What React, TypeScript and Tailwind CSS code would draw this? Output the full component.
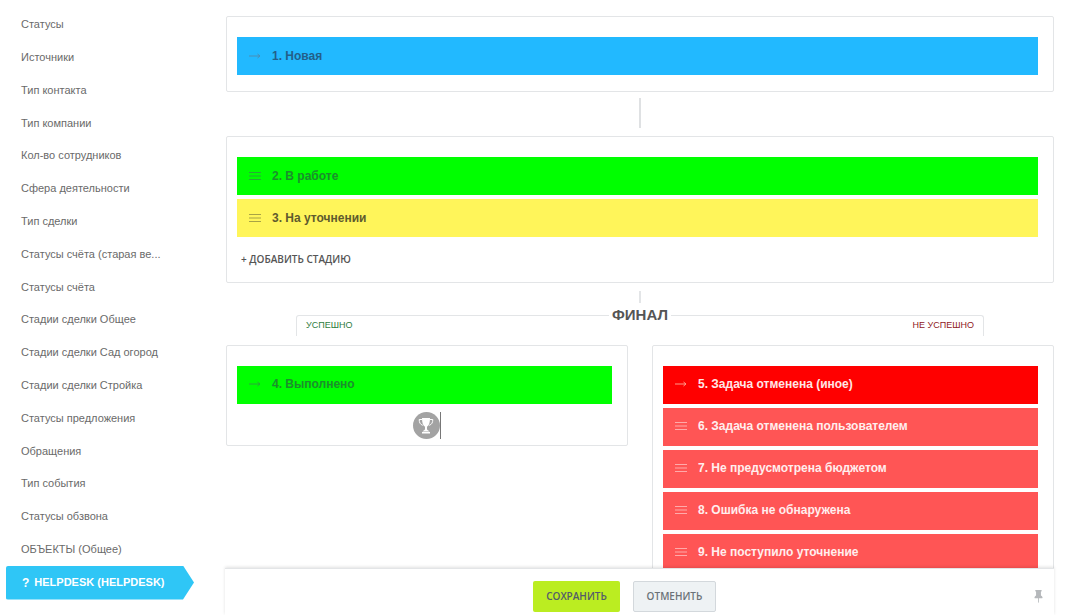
import React from "react";
import { BsPinFill } from "react-icons/bs";

const sideItems = [
  "Статусы",
  "Источники",
  "Тип контакта",
  "Тип компании",
  "Кол-во сотрудников",
  "Сфера деятельности",
  "Тип сделки",
  "Статусы счёта (старая ве...",
  "Статусы счёта",
  "Стадии сделки Общее",
  "Стадии сделки Сад огород",
  "Стадии сделки Стройка",
  "Статусы предложения",
  "Обращения",
  "Тип события",
  "Статусы обзвона",
  "ОБЪЕКТЫ (Общее)",
];

const Arrow = () => (
  <svg width="12" height="8" viewBox="0 0 12 8" fill="none" stroke="currentColor" strokeWidth="1">
    <path d="M0 4h11M8.5 2l2.5 2-2.5 2" />
  </svg>
);

const Burger = () => (
  <svg width="12" height="8" viewBox="0 0 12 8" fill="none" stroke="currentColor" strokeWidth="1">
    <path d="M0 .5h12M0 4h12M0 7.5h12" />
  </svg>
);

const Trophy = () => (
  <svg width="16" height="17" viewBox="0 0 16 17" fill="none">
    <path d="M4 1h8c0 4.500-.8 7.500-3 8.700V12c0 1 1.500 1.500 2.500 2.500h-7C5.500 13.500 7 13 7 12V9.700C4.800 8.500 4 5.500 4 1z" fill="white" />
    <path d="M4 2.500H1.200c0 3 1 5 3.600 5.800M12 2.500h2.800c0 3-1 5-3.600 5.800" stroke="white" strokeWidth="1" />
    <rect x="4" y="15" width="8" height="1.500" fill="white" />
  </svg>
);

type StageProps = {
  title: string;
  bg: string;
  text: string;
  icon: string;
  fixed?: boolean;
  lift?: boolean;
};

const Stage: React.FC<StageProps> = ({ title, bg, text, icon, fixed, lift }) => (
  <div className={`h-[38px] shrink-0 flex items-center pl-3 text-xs font-bold ${bg} ${lift ? "pb-[2px]" : ""}`}>
    <span className={`w-[23px] shrink-0 ${icon}`}>{fixed ? <Arrow /> : <Burger />}</span>
    <span className={text}>{title}</span>
  </div>
);

const cardClass = "bg-white border border-[#e3e5e7] rounded-[2px]";

export default function App() {
  return (
    <div className="relative w-[1065px] h-[615px] overflow-hidden bg-white flex font-['Liberation_Sans',Arial,sans-serif] text-[#555]">
      <aside className="w-[226px] shrink-0 pt-2 text-[11px]">
        {sideItems.map((item) => (
          <div key={item} className="h-[32.8px] flex items-center pl-[21px] text-[#6a6a6a]">
            {item}
          </div>
        ))}
        <div className="ml-[6px] w-[188px] h-[34px] flex items-center pl-4 gap-[5px] rounded-l-[2px] bg-[#2fc6f6] text-white font-bold [clip-path:polygon(0_0,177px_0,100%_50%,177px_100%,0_100%)]">
          <span className="text-xs">?</span>
          <span>HELPDESK (HELPDESK)</span>
        </div>
      </aside>

      <main className="w-[828px] pt-4 flex flex-col items-stretch">
        <section className={`${cardClass} h-[76px] pt-5 pl-[10px] pr-[15px]`}>
          <Stage title="1. Новая" bg="bg-[#22b9ff]" text="text-[#235f8a]" icon="text-[#4b8fb5]" fixed />
        </section>

        <div className="h-[30px] w-[2px] bg-[#dfe1e3] mt-[6px] mb-2 self-center" />

        <section className={`${cardClass} h-[147px] pt-5 pl-[10px] pr-[15px] flex flex-col gap-1`}>
          <Stage title="2. В работе" bg="bg-[#00ff00]" text="text-[#1b8f2c]" icon="text-[#2aa63a]" />
          <Stage title="3. На уточнении" bg="bg-[#fff55a]" text="text-[#5f5b2e]" icon="text-[#a8a345]" />
          <div className="pt-[11px] pl-1 text-[10px] font-semibold text-[#555] font-['Open_Sans',sans-serif]">
            + ДОБАВИТЬ СТАДИЮ
          </div>
        </section>

        <div className="h-3 w-[2px] bg-[#e3e5e7] mt-2 self-center" />

        <div className="relative mt-3 mx-[70px] h-[21px] border border-b-0 border-[#e3e5e7] rounded-t-[3px] flex justify-between items-center px-[9px] text-[9px]">
          <span className="text-[#2e7d40]">УСПЕШНО</span>
          <span className="text-[#8f2024]">НЕ УСПЕШНО</span>
          <span className="absolute left-1/2 -translate-x-1/2 -top-3 bg-white px-[3px] text-[15px] font-bold text-[#555]">
            ФИНАЛ
          </span>
        </div>

        <div className="mt-[9px] flex justify-between items-start">
          <section className={`${cardClass} w-[402px] h-[101px] pt-5 pl-[10px] pr-[15px]`}>
            <Stage title="4. Выполнено" bg="bg-[#00ff00]" text="text-[#1b8f2c]" icon="text-[#2aa63a]" fixed lift />
            <div className="mt-2 flex justify-center pl-1">
              <div className="flex items-stretch">
                <div className="w-[27px] h-[27px] rounded-full bg-[#a3a3a3] flex items-center justify-center">
                  <Trophy />
                </div>
                <div className="w-px bg-[#777]" />
              </div>
            </div>
          </section>

          <section className={`${cardClass} w-[402px] pt-5 pl-[10px] pr-[15px] flex flex-col gap-1`}>
            <Stage title="5. Задача отменена (иное)" bg="bg-[#ff0000]" text="text-[#ffe6e6]" icon="text-[#ff9a8a]" fixed lift />
            <Stage title="6. Задача отменена пользователем" bg="bg-[#ff5555]" text="text-[#ffeeee]" icon="text-[#ffaaaa]" lift />
            <Stage title="7. Не предусмотрена бюджетом" bg="bg-[#ff5555]" text="text-[#ffeeee]" icon="text-[#ffaaaa]" lift />
            <Stage title="8. Ошибка не обнаружена" bg="bg-[#ff5555]" text="text-[#ffeeee]" icon="text-[#ffaaaa]" lift />
            <Stage title="9. Не поступило уточнение" bg="bg-[#ff5555]" text="text-[#ffeeee]" icon="text-[#ffaaaa]" lift />
          </section>
        </div>
      </main>

      <footer className="absolute left-[225px] top-[568px] w-[829px] h-[47px] bg-white border-t border-[#e3e5e7] shadow-[0_-1px_3px_rgba(0,0,0,0.12)] pl-[308px] pt-3 flex items-start gap-[13px] text-[10px] font-semibold font-['Open_Sans',sans-serif]">
        <button className="w-[87px] h-[31px] rounded-[2px] bg-[#bbed21] text-[#535c69]">СОХРАНИТЬ</button>
        <button className="w-[83px] h-[31px] rounded-[2px] bg-[#eef2f4] border border-[#d3d8dc] text-[#6b7278]">ОТМЕНИТЬ</button>
        <BsPinFill size={13} className="absolute right-[9px] top-[21px] text-[#b5b8bb]" />
      </footer>
    </div>
  );
}
